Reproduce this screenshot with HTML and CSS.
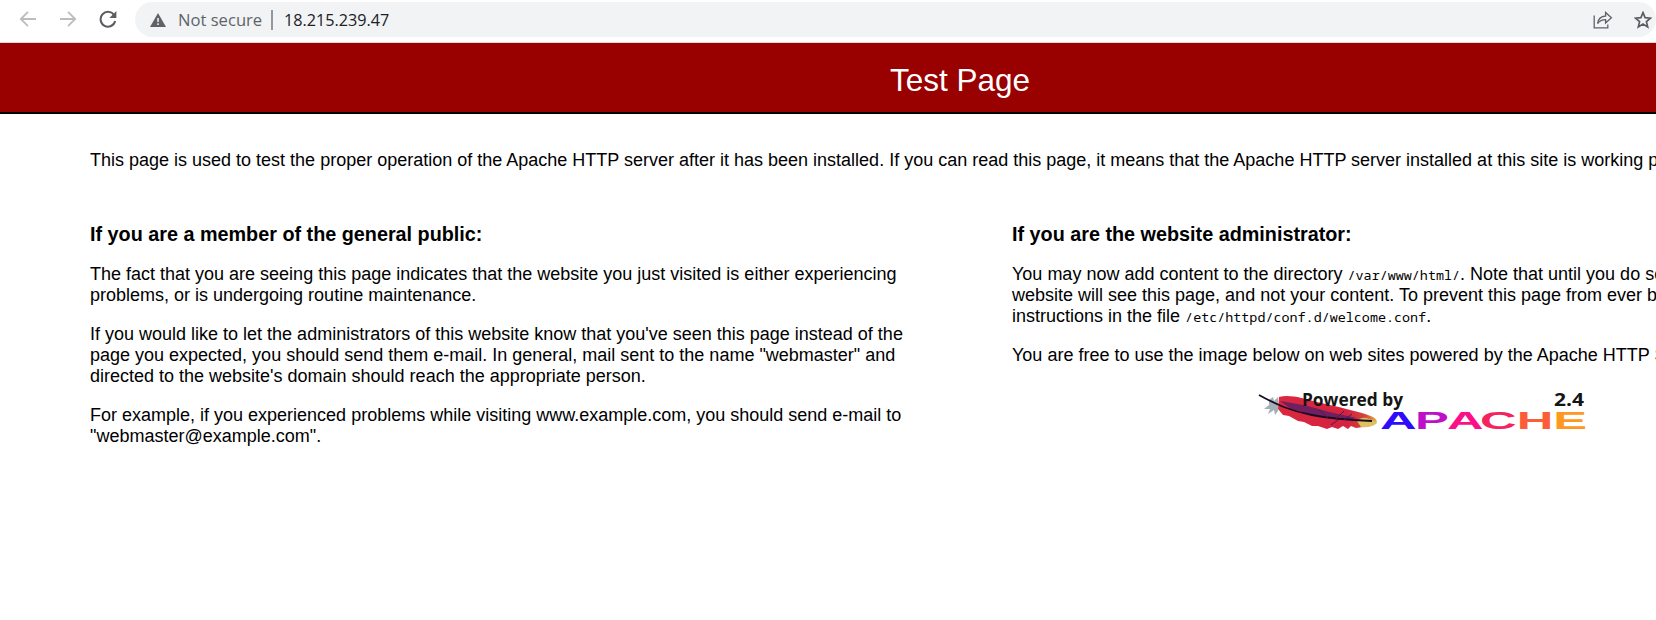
FILE: index.html
```html
<!DOCTYPE html>
<html lang="en">
<head>
<meta charset="utf-8">
<title>Test Page</title>
<link rel="stylesheet" href="styles.css">
</head>
<body>
<div class="browser-bar">
  <div class="nav-buttons">
    <svg class="nav-icon" viewBox="0 0 18 18"><path d="M17 9H2M9 1.8 1.8 9 9 16.2" fill="none" stroke="#bcbdbf" stroke-width="1.8"/></svg>
    <svg class="nav-icon" viewBox="0 0 18 18"><path d="M1 9h15M9 1.8 16.2 9 9 16.2" fill="none" stroke="#bcbdbf" stroke-width="1.8"/></svg>
    <svg class="nav-icon" viewBox="0 0 18 18"><path d="M15.2 5.2A7.4 7.4 0 1 0 16.2 11" fill="none" stroke="#5a5d61" stroke-width="2"/><path d="M17.4 1v7h-7z" fill="#5a5d61"/></svg>
  </div>
  <div class="address">
    <svg class="warn-icon" viewBox="0 0 16 14"><path d="M8 0 16 14H0z" fill="#5f6368"/><path d="M7.3 5h1.5v4H7.3zM7.3 10.3h1.5v1.6H7.3z" fill="#f1f3f4"/></svg>
    <span class="security">Not secure</span>
    <span class="divider"></span>
    <span class="url">18.215.239.47</span>
    <svg class="share-icon" viewBox="0 0 20 18"><path d="M1.2 4.5v12.3h13.6v-3.3M4.6 12.6C5.2 8 8 5.2 12.6 5V1.4L18.4 6.8 12.6 12V8.6C9 8.6 6.6 9.8 4.6 12.6z" fill="none" stroke="#5f6368" stroke-width="1.3"/></svg>
    <svg class="star-icon" viewBox="0 0 18 18"><path d="M9 1.6l2.1 5 5.4.5-4.1 3.5 1.3 5.3L9 13.1l-4.7 2.8 1.3-5.3L1.5 7.1l5.4-.5z" fill="none" stroke="#5a5d61" stroke-width="1.7"/></svg>
  </div>
</div>
<div class="page">
  <h1 class="title">Test Page</h1>
  <div class="content">
    <p class="intro">This page is used to test the proper operation of the Apache HTTP server after it has been installed. If you can read this page, it means that the Apache HTTP server installed at this site is working properly.</p>
    <div class="columns">
      <div class="column">
        <h2>If you are a member of the general public:</h2>
        <p>The fact that you are seeing this page indicates that the website you just visited is either experiencing problems, or is undergoing routine maintenance.</p>
        <p>If you would like to let the administrators of this website know that you've seen this page instead of the page you expected, you should send them e-mail. In general, mail sent to the name "webmaster" and directed to the website's domain should reach the appropriate person.</p>
        <p>For example, if you experienced problems while visiting www.example.com, you should send e-mail to "webmaster@example.com".</p>
      </div>
      <div class="column">
        <h2>If you are the website administrator:</h2>
        <p>You may now add content to the directory <code>/var/www/html/</code>. Note that until you do so, people visiting your website will see this page, and not your content. To prevent this page from ever being used, follow the instructions in the file <code>/etc/httpd/conf.d/welcome.conf</code>.</p>
        <p>You are free to use the image below on web sites powered by the Apache HTTP Server:</p>
        <svg class="logo" viewBox="-2 0 330 44">
          <defs>
            <linearGradient id="vane" x1="0" x2="1">
              <stop offset="0" stop-color="#dc2840"/><stop offset=".7" stop-color="#d42340"/><stop offset=".88" stop-color="#d2453a"/><stop offset="1" stop-color="#e0b23c"/>
            </linearGradient>
          </defs>
          <path d="M11 8l4-3 1 4 4-4v14l-3 4-1-5-6 4 2-5-6 0 5-4z" fill="#a3b0b8"/>
          <path d="M21 5c10-3 24 1 38 5 20 5 42 9 56 15 3 2 5 4 3 6-5 4-14 4-20 5l-5-2-3 3-5-3-5 3-6-2-5 2-9-3-6 0-8-4-6-1-9-5-6-1-5-6z" fill="url(#vane)"/>
          <path d="M22 9c12 2 25 4 39 8 12 4 26 6 38 9l-8 2-10-3-10 2-9-3-12-2-8-3-9-2z" fill="#702060"/>
          <path d="M99 29c4-4 8-4 12-2 5 1 8 3 8 4-4 4-11 5-16 4z" fill="#dfc061"/>
          <path d="M1 3c18 10 32 16 53 20 20 4 38 5 60 6" fill="none" stroke="#180d22" stroke-width="1.8"/>
          <path d="M78 27l8-8M86 28l8-6M70 26l-9-8M80 28l-7 5" stroke="#52184d" stroke-width="1" fill="none"/>
          <text class="powered" x="44" y="14" textLength="101" lengthAdjust="spacingAndGlyphs">Powered by</text>
          <text class="version" x="296" y="14" textLength="30" lengthAdjust="spacingAndGlyphs">2.4</text>
          <text class="apache" transform="scale(2.07 1)" y="37"><tspan x="58.9" fill="#2c0cfb">A</tspan><tspan x="75.8" fill="#bd10c8">P</tspan><tspan x="91.3" fill="#fb1088">A</tspan><tspan x="107.3" fill="#f4235e">C</tspan><tspan x="125" fill="#fb5d38">H</tspan><tspan x="142.7" fill="#ff9820">E</tspan></text>
        </svg>
      </div>
    </div>
  </div>
</div>
</body>
</html>
```

FILE: styles.css
```css
html { overflow: hidden; }
body {
  margin: 0;
  height: 620px;
  overflow: hidden;
  background: #fff;
  color: #000;
  font: 18px/21px "Liberation Sans", Arial, sans-serif;
}
.browser-bar {
  display: flex;
  box-sizing: border-box;
  height: 43px;
  padding-top: 2px;
  border-bottom: 1px solid #e9d3d1;
}
.nav-buttons {
  display: flex;
  gap: 22px;
  width: 135px;
  box-sizing: border-box;
  padding: 8px 0 0 19px;
}
.nav-icon { width: 18px; height: 18px; flex: none; }
.address {
  flex: 1;
  display: flex;
  align-items: center;
  box-sizing: border-box;
  height: 35px;
  padding: 0 4px 0 15px;
  border-radius: 18px;
  background: #f1f3f4;
  font: 16.6px/24px "Open Sans", "Noto Sans", sans-serif;
}
.warn-icon { width: 16px; height: 14px; margin-right: 12px; }
.security { width: 84px; color: #5f6368; white-space: nowrap; }
.divider { width: 2px; height: 20px; margin: 0 11px 0 9px; background: #94979b; }
.url { color: #202124; font-size: 16.2px; }
.share-icon { width: 20px; height: 18px; margin-left: auto; }
.star-icon { width: 18px; height: 18px; margin-left: 21px; }
.page { width: 1920px; }
.title {
  box-sizing: border-box;
  height: 71px;
  margin: 0;
  padding-top: 19px;
  border-bottom: 2px solid #000;
  background: #900;
  color: #fff;
  font-size: 31.5px;
  font-weight: normal;
  line-height: 36px;
  text-align: center;
}
.content { padding: 36px 90px 0; }
.content p { margin: 0 0 18px; }
.content .intro { margin-bottom: 52px; }
.columns { display: flex; justify-content: space-between; }
.column { width: 818px; }
h2 { margin: 0 0 18px; font-size: 19.8px; line-height: 23px; }
code { font: 13.4px/1 "Noto Sans Mono", "DejaVu Sans Mono", monospace; }
.logo { display: block; width: 330px; height: 44px; margin: 26px auto 0; }
.powered, .version { font: bold 18px "Open Sans", sans-serif; fill: #151515; }
.apache { font: bold 24.5px "Liberation Sans", Arial, sans-serif; }
```
